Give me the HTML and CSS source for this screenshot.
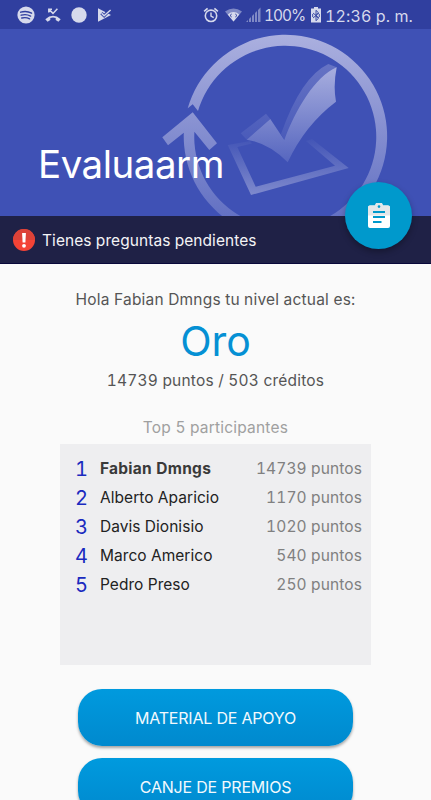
FILE: index.html
```
<!DOCTYPE html>
<html lang="es">
<head>
  <meta charset="UTF-8" />
  <meta name="viewport" content="width=device-width, initial-scale=1" />
  <title>Evaluaarm</title>
  <link rel="stylesheet" href="styles.css">
</head>
<body>
  <!-- Status bar -->
  <div class="status-bar">
    <div class="status-left">
      <svg width="18" height="18" viewBox="0 0 18 18">
        <circle cx="9" cy="9" r="8.6" fill="#d6d9ec"/>
        <path d="M3.7 6.2Q9.5 4.4 14.6 7.2M4.2 9.2Q9.3 7.7 13.6 10.1M4.8 12Q9 10.9 12.6 12.8" fill="none" stroke="#303f9f" stroke-width="1.4" stroke-linecap="round"/>
      </svg>
      <svg width="16" height="16" viewBox="0 0 16 16">
        <path d="M.3 12.2Q8 5.4 15.7 12.2L13.4 14.7L10.7 13V10.9Q8 10.1 5.3 10.9V13L2.6 14.7Z" fill="#d6d9ec"/>
        <path d="M3.8 5.6V2.2H7M4 2.4L8 6.4L12.4 1.8" fill="none" stroke="#d6d9ec" stroke-width="1.5"/>
      </svg>
      <svg width="16" height="16" viewBox="0 0 16 16"><circle cx="8" cy="8" r="7.7" fill="#d6d9ec"/></svg>
      <svg width="15" height="16" viewBox="0 0 15 16">
        <path d="M1 1.2L14 8L1 14.8Z" fill="#d6d9ec"/>
        <path d="M4.4 6.2L7.1 8.8L12.6 3.2" fill="none" stroke="#303f9f" stroke-width="3.2"/>
        <path d="M4.6 6.2L7.1 8.8L13.6 3" fill="none" stroke="#d6d9ec" stroke-width="1.4"/>
      </svg>
    </div>
    <div class="status-right">
      <svg width="16" height="16" viewBox="0 0 16 16" fill="none" stroke="#d6d9ec">
        <circle cx="8" cy="8.8" r="5.7" stroke-width="1.6"/>
        <path d="M8 5.4V9.2L10.7 10.7" stroke-width="1.4"/>
        <path d="M1.1 4.3L4.6 1.3M14.9 4.3L11.4 1.3" stroke-width="1.7"/>
      </svg>
      <svg class="wifi" width="17" height="14" viewBox="0 0 17 14">
        <path d="M0 3.4Q8.5 -2.5 17 3.4L8.5 13.5Z" fill="#7f89c5"/>
        <path d="M2.7 6.4Q8.5 1.7 14.3 6.4L8.5 13.5Z" fill="#d6d9ec"/>
        <path d="M6.7 6L5 7.5L6.7 9M10.3 6L12 7.5L10.3 9" fill="none" stroke="#303f9f"/>
      </svg>
      <svg class="signal" width="15" height="16" viewBox="0 0 15 16" fill="#7f89c5">
        <path d="M0 15L2 13V15ZM3 15V12L5 10V15ZM6 15V9L8 7V15ZM9 15V6L11 4V15ZM12 15V3L14.5 .5V15Z"/>
      </svg>
      <span class="battery-text">100%</span>
      <svg class="battery" width="10" height="16" viewBox="0 0 10 16">
        <path d="M3 0H7V1.5H10V15.5H0V1.5H3Z" fill="#d6d9ec"/>
        <path d="M5 3.2V13.8M2 6L8 11M2 11L8 6M5 3.4L7.3 5.5L5 7.8M5 9L7.3 11.5L5 13.6M1.7 7V10M8.3 7V10" fill="none" stroke="#303f9f" stroke-width=".9"/>
      </svg>
      <span class="clock">12:36 p. m.</span>
    </div>
  </div>

  <header class="hero">
    <svg class="hero-art" width="431" height="187" viewBox="0 29 431 187">
      <defs>
        <linearGradient id="ring" gradientUnits="userSpaceOnUse" x1="0" y1="35" x2="0" y2="216">
          <stop offset="0" stop-color="#abb0df"/>
          <stop offset="1" stop-color="#6371c3"/>
        </linearGradient>
        <linearGradient id="tick" gradientUnits="userSpaceOnUse" x1="0" y1="66" x2="0" y2="162">
          <stop offset="0" stop-color="#a9afdf"/>
          <stop offset="1" stop-color="#5666bf"/>
        </linearGradient>
        <linearGradient id="side" gradientUnits="userSpaceOnUse" x1="0" y1="64" x2="0" y2="140">
          <stop offset="0" stop-color="#6673c4"/>
          <stop offset="1" stop-color="#4a5bba"/>
        </linearGradient>
        <linearGradient id="box" gradientUnits="userSpaceOnUse" x1="0" y1="138" x2="0" y2="195">
          <stop offset="0" stop-color="#4254b6"/>
          <stop offset="1" stop-color="#7f8acd"/>
        </linearGradient>
      </defs>
      <path fill="url(#ring)" d="M187.7 108.3L192.7 104.3L198 111A91 91 0 1 1 194.4 131.7L209.3 150L217 143.3L192.7 112.3L162.3 137.3L168 145.3L183.8 132.7A101.7 101.7 0 1 0 187.7 108.3Z"/>
      <path fill="url(#box)" d="M227.7 145L250 141L252 143.5L237.3 147L255.7 186.7L335 165.7L306 141L312 139L348.7 168L251 195Z"/>
      <path fill="url(#side)" d="M240.7 133.3L266 113.7L270.3 119L246.7 139.7ZM281 134Q301 77 328.3 64L336.7 67.3L284.3 140Z"/>
      <path fill="url(#tick)" d="M246.7 139.7L270.3 119L284.3 140C295 111 315 76 336.7 67.3Q333 86 336 101.7Q305 125 287.7 162.3Q269 143 246.7 139.7Z"/>
    </svg>
    <h1>Evaluaarm</h1>
  </header>

  <div class="alert">
    <svg width="22" height="22" viewBox="0 0 22 22">
      <circle cx="11" cy="11" r="11" fill="#f44336"/>
      <path d="M0 11A11 11 0 0 1 22 11Z" fill="#dc4238"/>
      <path d="M9.1 4H12.9L12.4 13.5H9.6Z" fill="#fff"/>
      <circle cx="11" cy="16.8" r="1.9" fill="#fff"/>
    </svg>
    <span class="alert-text">Tienes preguntas pendientes</span>
    <button class="fab" aria-label="Preguntas">
      <svg width="24" height="26" viewBox="0 0 24 26">
        <path d="M3 2.5H8.3A3.5 3 0 0 1 15.7 2.5H21A2 2 0 0 1 23 4.5V23A2 2 0 0 1 21 25H3A2 2 0 0 1 1 23V4.5A2 2 0 0 1 3 2.5Z" fill="#fff"/>
        <path d="M3 2.5H8.3A3.5 3 0 0 1 15.7 2.5H21A2 2 0 0 1 23 4.5V12.5H1V4.5A2 2 0 0 1 3 2.5Z" fill="#e4e7ea"/>
        <circle cx="12" cy="3.6" r="1.3" fill="#0099cc"/>
        <path d="M6 9H18M6 14H18M6 19H14.5" stroke="#0099cc" stroke-width="2.2"/>
      </svg>
    </button>
  </div>

  <main>
    <p class="greeting">Hola Fabian Dmngs tu nivel actual es:</p>
    <p class="level">Oro</p>
    <p class="score">14739 puntos / 503 créditos</p>
    <p class="top-title">Top 5 participantes</p>

    <div class="ranking">
      <div class="row first"><span class="pos">1</span><span class="name">Fabian Dmngs</span><span class="points">14739 puntos</span></div>
      <div class="row"><span class="pos">2</span><span class="name">Alberto Aparicio</span><span class="points">1170 puntos</span></div>
      <div class="row"><span class="pos">3</span><span class="name">Davis Dionisio</span><span class="points">1020 puntos</span></div>
      <div class="row"><span class="pos">4</span><span class="name">Marco Americo</span><span class="points">540 puntos</span></div>
      <div class="row"><span class="pos">5</span><span class="name">Pedro Preso</span><span class="points">250 puntos</span></div>
    </div>

    <div class="actions">
      <button class="btn">MATERIAL DE APOYO</button>
      <button class="btn">CANJE DE PREMIOS</button>
    </div>
  </main>
</body>
</html>
```
FILE: styles.css
```
/* Global Styles */
* {
  box-sizing: border-box;
}

html, body {
  margin: 0;
  padding: 0;
  height: 800px;
  overflow: hidden;
  background-color: #fafafa;
  font-family: Inter, sans-serif;
  font-variant-numeric: tabular-nums;
}

svg {
  display: block;
  flex-shrink: 0;
}

p, h1 {
  margin: 0;
  font-weight: 400;
  white-space: nowrap;
}

button {
  border: none;
  padding: 0;
  font-family: inherit;
}

/* Status bar */
.status-bar {
  display: flex;
  justify-content: space-between;
  height: 29px;
  padding: 0 18px 0 17px;
  background: #303f9f;
  color: #d6d9ec;
  font-size: 16px;
}

.status-left,
.status-right {
  display: flex;
  align-items: center;
}

.status-left {
  gap: 10px;
}

.wifi {
  margin-left: 6px;
}

.signal {
  margin: 0 3px 0 4px;
}

.battery {
  margin: 0 4px 0 6px;
}

.battery-text,
.clock {
  padding-top: 2px;
  white-space: nowrap;
}

.battery-text {
  font-size: 15.5px;
  letter-spacing: -1.1px;
}

.clock {
  letter-spacing: 0.1px;
}

/* Header with logo */
.hero {
  position: relative;
  height: 187px;
  padding: 112px 0 0 38px;
  background: #3f51b5;
}

.hero-art {
  position: absolute;
  top: 0;
  left: 0;
}

h1 {
  position: relative;
  color: #fff;
  font-size: 38.5px;
  line-height: 46px;
  letter-spacing: -0.5px;
}

/* Pending questions bar */
.alert {
  position: relative;
  display: flex;
  align-items: center;
  gap: 7px;
  height: 48px;
  padding-left: 13px;
  background: #1f2146;
  border-bottom: 1px solid #08083a;
  color: #f4f4f6;
  font-size: 15.5px;
}

.alert-text {
  padding-top: 2px;
  letter-spacing: 0.07px;
}

.fab {
  position: absolute;
  top: -34px;
  right: 19px;
  display: flex;
  align-items: center;
  justify-content: center;
  width: 67px;
  height: 67px;
  border-radius: 50%;
  background: #0099cc;
  box-shadow: 0 3px 6px rgba(0, 0, 0, 0.3);
}

/* Level info */
main {
  display: flex;
  flex-direction: column;
  align-items: center;
  padding-top: 26px;
}

.greeting,
.score,
.top-title {
  font-size: 15.5px;
  line-height: 20px;
  letter-spacing: 0.2px;
  color: #555;
}

.level {
  margin-top: 6px;
  font-size: 41px;
  line-height: 50px;
  color: #0590d4;
}

.score {
  margin-top: 5px;
}

.top-title {
  margin-top: 27px;
  color: #a0a0a0;
}

/* Top participants */
.ranking {
  width: 311px;
  height: 221px;
  margin-top: 6px;
  padding: 10px 9px 0 15px;
  background: #eeeef0;
}

.row {
  display: flex;
  align-items: center;
  height: 29px;
  font-size: 15.5px;
  letter-spacing: 0.05px;
  color: #222;
}

.first .name {
  font-weight: 700;
  letter-spacing: 0.25px;
  color: #3a3a3a;
}

.pos {
  width: 25px;
  font-size: 20px;
  color: #1a2abf;
}

.points {
  margin-left: auto;
  letter-spacing: 0.12px;
  color: #808080;
}

/* Buttons */
.actions {
  display: flex;
  flex-direction: column;
  gap: 12px;
  margin-top: 24px;
}

.btn {
  width: 275px;
  height: 57px;
  padding-top: 1px;
  border-radius: 24px;
  background: linear-gradient(#009ade, #0089ce);
  box-shadow: 0 2px 3px rgba(0, 0, 0, 0.35);
  color: #f2f9fd;
  font-size: 16px;
  letter-spacing: -0.2px;
}
```
